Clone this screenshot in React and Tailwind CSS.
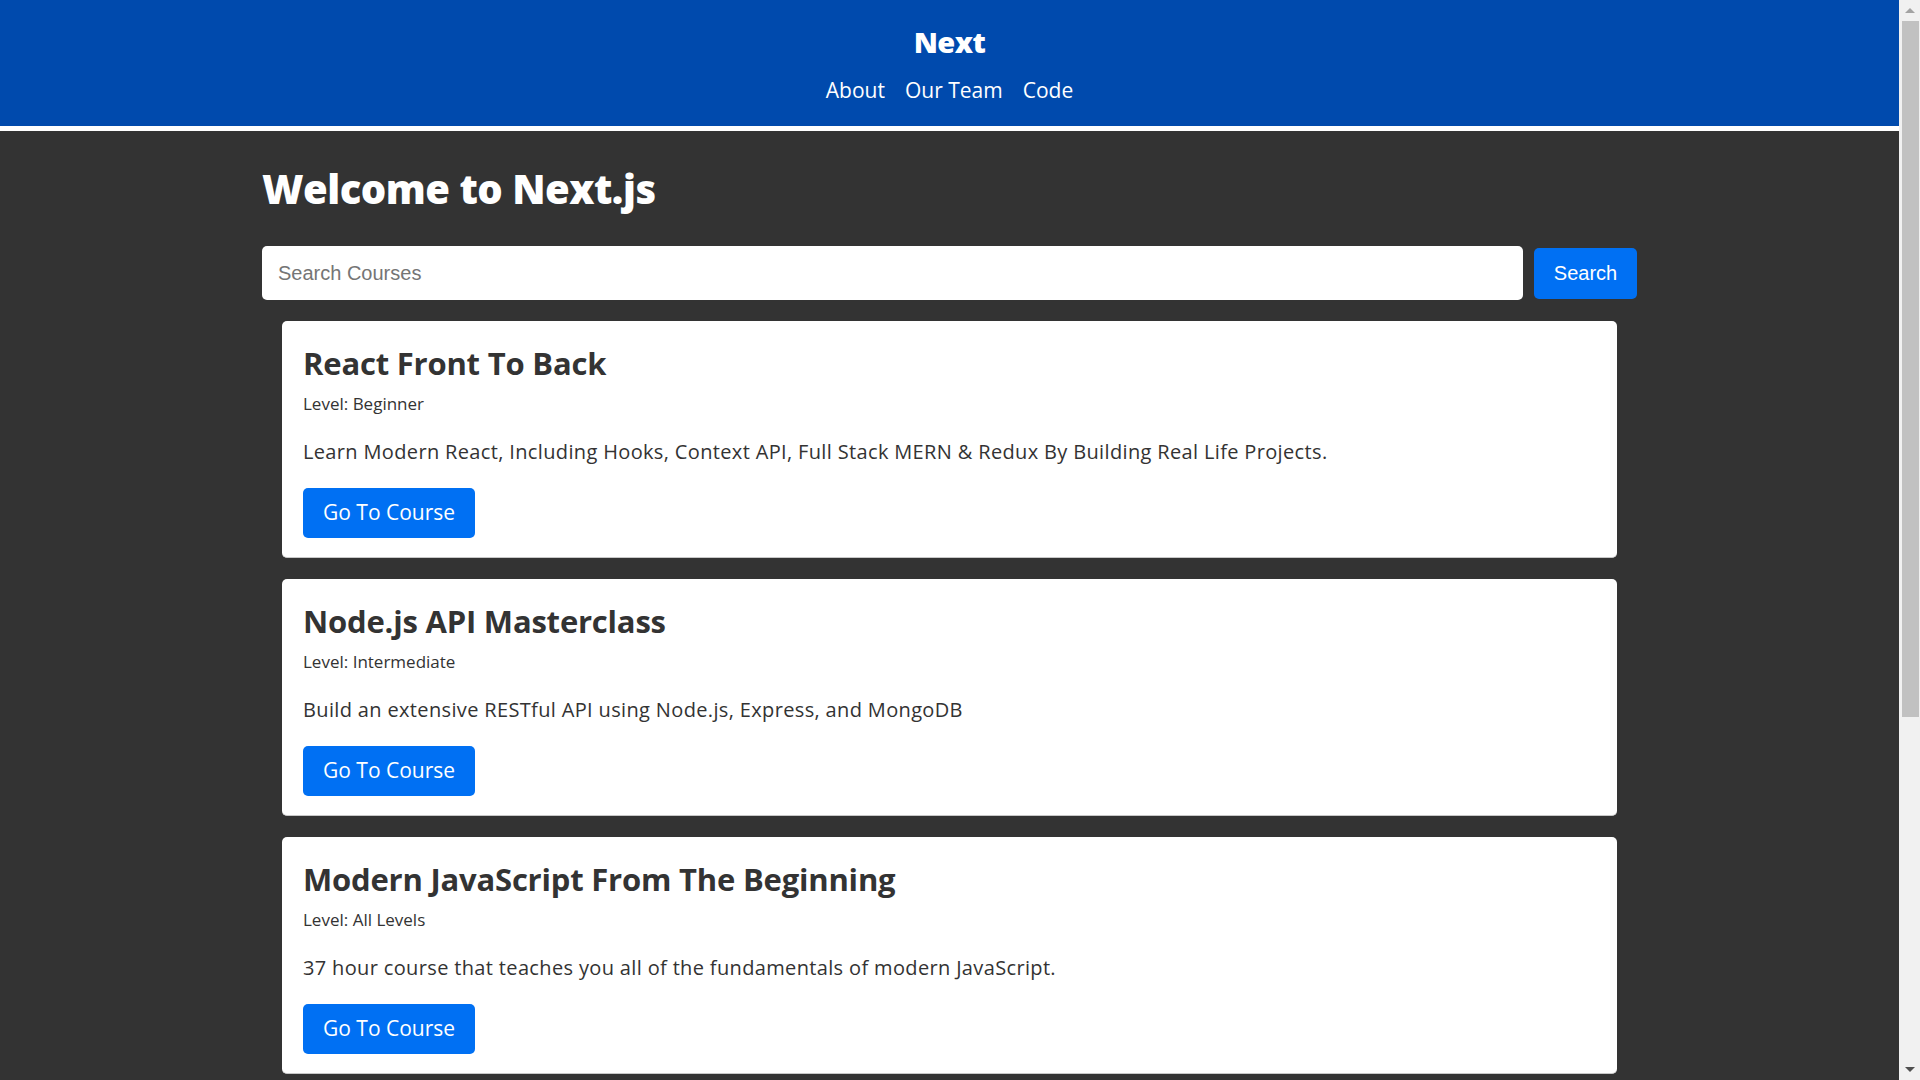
import React, { useState } from "react";

const courses = [
  {
    id: 1,
    title: "React Front To Back",
    level: "Beginner",
    description:
      "Learn Modern React, Including Hooks, Context API, Full Stack MERN & Redux By Building Real Life Projects.",
  },
  {
    id: 2,
    title: "Node.js API Masterclass",
    level: "Intermediate",
    description: "Build an extensive RESTful API using Node.js, Express, and MongoDB",
  },
  {
    id: 3,
    title: "Modern JavaScript From The Beginning",
    level: "All Levels",
    description: "37 hour course that teaches you all of the fundamentals of modern JavaScript.",
  },
  {
    id: 4,
    title: "Python Django Dev To Deployment",
    level: "Intermediate",
    description: "Build a real estate application with Python, Django, PostgreSQL and deploy it.",
  },
  {
    id: 5,
    title: "50 Projects In 50 Days",
    level: "Beginner",
    description: "Sharpen your skills by building 50 quick, unique & fun mini projects with HTML, CSS and JavaScript.",
  },
];

const sans = { fontFamily: "'Open Sans', 'Liberation Sans', sans-serif" };
const arial = { fontFamily: "'Liberation Sans', Arial, sans-serif" };

// browser scrollbar as seen in the screenshot
function Scrollbar() {
  return (
    <div className="fixed top-0 right-0 h-screen w-[21px] bg-[#f1f1f1] flex flex-col items-center">
      <div className="h-[21px] w-full flex items-center justify-center">
        <div className="w-0 h-0 border-l-[5px] border-r-[5px] border-b-[5px] border-l-transparent border-r-transparent border-b-[#a3a3a3]" />
      </div>
      <div className="ml-[2px] w-[17px] h-[696px] bg-[#c1c1c1]" />
      <div className="flex-1" />
      <div className="h-[21px] w-full flex items-center justify-center">
        <div className="w-0 h-0 border-l-[5px] border-r-[5px] border-t-[5px] border-l-transparent border-r-transparent border-t-[#505050]" />
      </div>
    </div>
  );
}

export default function App() {
  const [query, setQuery] = useState("");

  return (
    <div className="min-h-screen bg-[#333333] pr-[21px]" style={sans}>
      {/* Header */}
      <header className="h-[131px] bg-[#004aad] border-b-[5px] border-white text-white text-center pt-[24px]">
        <h1 className="text-[29px] leading-[36px] font-extrabold tracking-[-0.5px]">Next</h1>
        <nav className="mt-[16px] flex justify-center gap-[20px] text-[21px] leading-[28px]">
          <a href="#">About</a>
          <a href="#">Our Team</a>
          <a href="#">Code</a>
        </nav>
      </header>

      <main className="w-[1375px] mx-auto pt-[32px] pb-[36px]">
        <h1 className="text-[40px] leading-[52px] font-extrabold text-white tracking-[-0.5px]">
          Welcome to Next.js
        </h1>

        {/* Search */}
        <form className="mt-[31px] flex items-center gap-[11px]" onSubmit={(e) => e.preventDefault()}>
          <input
            className="flex-1 h-[54px] bg-white rounded-[5px] px-[16px] text-[20px] text-[#333] placeholder:text-[#757575] outline-none"
            style={arial}
            placeholder="Search Courses"
            value={query}
            onChange={(e) => setQuery(e.target.value)}
          />
          <button
            className="w-[103px] h-[51px] bg-[#0070f3] text-white rounded-[5px] text-[20px]"
            style={arial}
          >
            Search
          </button>
        </form>

        {/* Course cards */}
        <div className="mt-[21px] mx-[20px] flex flex-col gap-[21px]">
          {courses.map((c) => (
            <div
              key={c.id}
              className="h-[237px] bg-white rounded-[5px] border-b border-[#c8c8c8] px-[21px] pt-[22px] text-[#333333]"
            >
              <h3 className="text-[31px] leading-[40px] font-bold tracking-[-0.2px]">{c.title}</h3>
              <small className="block mt-[9px] text-[17px] leading-[24px]">Level: {c.level}</small>
              <p className="mt-[22px] text-[20px] leading-[28px] tracking-[0.35px]">{c.description}</p>
              <a
                href="#"
                className="mt-[22px] inline-flex items-center h-[50px] px-[20px] bg-[#0070f3] text-white rounded-[5px] text-[21px]"
              >
                Go To Course
              </a>
            </div>
          ))}
        </div>
      </main>

      <Scrollbar />
    </div>
  );
}
